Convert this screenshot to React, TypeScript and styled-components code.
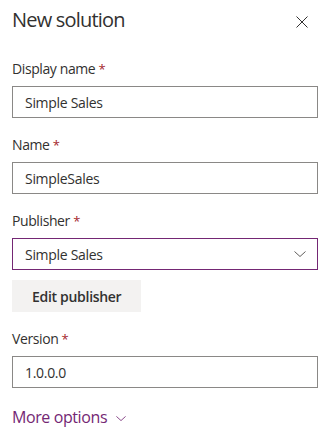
import styled, { createGlobalStyle } from "styled-components";

const GlobalStyle = createGlobalStyle`
  html, body {
    margin: 0;
    padding: 0;
    background: #ffffff;
  }
  body {
    font-family: "Open Sans", "Noto Sans", sans-serif;
    color: #323130;
  }
  * {
    box-sizing: border-box;
  }
`;

interface FieldProps {
  label: string;
  value: string;
}

const TextField = ({ label, value }: FieldProps) => {
  return (
    <Field>
      <Label>
        {label} <Required>*</Required>
      </Label>
      <Input readOnly value={value} />
    </Field>
  );
};

const ChevronDown = ({ size }: { size: number }) => (
  <svg width={size} height={size / 2} viewBox="0 0 12 6" fill="none">
    <path d="M0.5 0.5 L6 5.5 L11.5 0.5" stroke="currentColor" strokeWidth="1" />
  </svg>
);

const App = () => {
  return (
    <Panel>
      <GlobalStyle />
      <Header>
        <Title>New solution</Title>
        <CloseButton aria-label="Close">
          <svg width="12" height="12" viewBox="0 0 12 12" fill="none">
            <path d="M0.5 0.5 L11.5 11.5 M11.5 0.5 L0.5 11.5" stroke="#323130" strokeWidth="1" />
          </svg>
        </CloseButton>
      </Header>

      <TextField label="Display name" value="Simple Sales" />
      <TextField label="Name" value="SimpleSales" />

      <Field>
        <Label>
          Publisher <Required>*</Required>
        </Label>
        <Dropdown>
          <span>Simple Sales</span>
          <DropdownIcon>
            <ChevronDown size={12} />
          </DropdownIcon>
        </Dropdown>
        <SecondaryButton>Edit publisher</SecondaryButton>
      </Field>

      <TextField label="Version" value="1.0.0.0" />

      <MoreOptions>
        More options
        <ChevronDown size={10} />
      </MoreOptions>
    </Panel>
  );
};

const Panel = styled.div`
  width: 326px;
  height: 440px;
  padding: 6px 8px 0 12px;
  display: flex;
  flex-direction: column;
  overflow: hidden;
`;

const Header = styled.div`
  display: flex;
  justify-content: space-between;
  align-items: flex-start;
  margin-bottom: 25px;
`;

const Title = styled.h1`
  margin: 0;
  font-size: 20px;
  line-height: 28px;
  font-weight: 400;
  color: #323130;
  letter-spacing: -0.8px;
`;

const CloseButton = styled.button`
  width: 24px;
  height: 24px;
  margin: 4px 4px 0 0;
  padding: 0;
  border: none;
  background: transparent;
  display: flex;
  align-items: center;
  justify-content: center;
`;

const Field = styled.div`
  display: flex;
  flex-direction: column;
  margin-bottom: 17px;
`;

const Label = styled.label`
  font-size: 14px;
  line-height: 20px;
  padding-bottom: 7px;
  color: #323130;
  letter-spacing: -0.4px;
`;

const Required = styled.span`
  color: #a4262c;
  font-size: 13px;
`;

const Input = styled.input`
  height: 32px;
  width: 100%;
  border: 1px solid #8a8886;
  border-radius: 0;
  padding: 0 12px;
  font-family: "Open Sans", "Noto Sans", sans-serif;
  font-size: 14px;
  color: #323130;
  letter-spacing: -0.3px;
  outline: none;
  background: #ffffff;
`;

const Dropdown = styled.div`
  height: 32px;
  border: 1px solid #742774;
  padding: 0 11px 0 12px;
  display: flex;
  align-items: center;
  justify-content: space-between;
  font-size: 14px;
  letter-spacing: -0.3px;
  color: #323130;
`;

const DropdownIcon = styled.span`
  display: flex;
  color: #605e5c;
`;

const SecondaryButton = styled.button`
  align-self: flex-start;
  margin-top: 10px;
  height: 32px;
  padding: 0 20px;
  border: none;
  border-radius: 0;
  background: #f3f2f1;
  font-family: "Open Sans", "Noto Sans", sans-serif;
  font-size: 14px;
  font-weight: 600;
  letter-spacing: -0.3px;
  color: #323130;
`;

const MoreOptions = styled.div`
  margin-top: 1px;
  display: flex;
  align-items: center;
  gap: 9px;
  font-size: 16px;
  line-height: 22px;
  letter-spacing: -0.4px;
  color: #742774;
  svg {
    margin-top: 2px;
    color: #742774;
  }
`;

export default App;
